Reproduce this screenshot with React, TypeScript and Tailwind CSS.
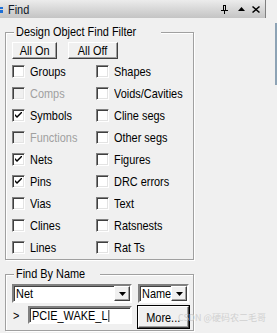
import React from "react";

const font = "font-['Liberation_Sans',Arial,sans-serif]";

// the dialog font is a tall, narrow bitmap face; squeeze Liberation Sans to its width
function T({ children, center }: { children: React.ReactNode; center?: boolean }) {
  return (
    <span className={`inline-block whitespace-nowrap scale-x-[0.84] ${center ? "origin-center" : "origin-left"}`}>
      {children}
    </span>
  );
}

function CheckBox({ checked, disabled }: { checked?: boolean; disabled?: boolean }) {
  return (
    <span
      className={`flex h-[13px] w-[13px] shrink-0 items-center justify-center border border-t-[#808080] border-l-[#808080] border-b-white border-r-white shadow-[inset_1px_1px_0_#404040,inset_-1px_-1px_0_#e3e3e3] ${
        disabled ? "bg-[#f0f0f0]" : "bg-white"
      }`}
    >
      {checked && (
        <svg width="7" height="7" viewBox="0 0 7 7">
          <path d="M0 2 L0 4 L2 6 L7 1 L7 -1 L2 4 Z" fill="#000" />
        </svg>
      )}
    </span>
  );
}

function Check({ label, checked, disabled }: { label: string; checked?: boolean; disabled?: boolean }) {
  return (
    <div className="flex h-[22px] items-center">
      <CheckBox checked={checked} disabled={disabled} />
      <span className={`ml-[5px] leading-[15px] ${disabled ? "text-[#a0a0a0]" : "text-black"}`}>
        <T>{label}</T>
      </span>
    </div>
  );
}

function Button({ label, className }: { label: string; className?: string }) {
  return (
    <div
      className={`flex items-center justify-center bg-[#f0f0f0] border border-t-white border-l-white border-b-[#404040] border-r-[#404040] shadow-[inset_-1px_-1px_0_#a0a0a0] leading-[15px] ${className ?? ""}`}
    >
      <T center>{label}</T>
    </div>
  );
}

function DropArrow() {
  return (
    <div className="flex h-full w-[16px] items-center justify-center bg-[#f0f0f0] border border-t-white border-l-white border-b-[#404040] border-r-[#404040] shadow-[inset_-1px_-1px_0_#a0a0a0]">
      <svg width="7" height="4" viewBox="0 0 7 4">
        <path d="M0 0 H7 L3.5 4 Z" fill="#000" />
      </svg>
    </div>
  );
}

function Combo({ value, className }: { value: string; className?: string }) {
  return (
    <div
      className={`flex items-stretch bg-white border-2 border-t-[#808080] border-l-[#808080] border-b-white border-r-white shadow-[inset_1px_1px_0_#404040] ${className ?? ""}`}
    >
      <span className="min-w-0 flex-1 self-center pl-[2px] leading-[15px]">
        <T>{value}</T>
      </span>
      <DropArrow />
    </div>
  );
}

function GroupBox({ title, className, children }: { title: string; className?: string; children: React.ReactNode }) {
  return (
    <div className={`relative border border-[#a0a0a0] shadow-[1px_1px_0_#fff,inset_1px_1px_0_#fff] ${className ?? ""}`}>
      <span className="absolute left-[8px] top-[-9px] bg-[#f0f0f0] px-[2px] leading-[15px]">
        <T>{title}</T>
      </span>
      {children}
    </div>
  );
}

export default function App() {
  return (
    <div className={`relative h-[333px] w-[277px] overflow-hidden bg-[#f0f0f0] text-[13px] text-black ${font}`}>
      <div className="flex h-[18px] w-[266px] items-center border-r border-[#808080] bg-gradient-to-b from-[#ececec] to-[#c4c4c4]">
        <div className="flex w-[8px] flex-col gap-[1px] pt-[1px]">
          <span className="h-[2px] w-[3px] bg-[#1e6fd6]" />
          <span className="h-[3px] w-[3px] bg-[#1e6fd6]" />
        </div>
        <span className="leading-[15px] text-[#101828]">
          <T>Find</T>
        </span>
        <div className="ml-auto flex items-center pr-[5px]">
          <svg width="7" height="9" viewBox="0 0 7 9">
            <path d="M2 0 H5 V5 H7 V6 H4 V9 H3 V6 H0 V5 H2 Z M3 1 V5 H4 V1 Z" fill="#000" fillRule="evenodd" />
          </svg>
          <svg className="ml-[10px]" width="7" height="4" viewBox="0 0 7 4">
            <path d="M0 4 H7 L3.5 0 Z" fill="#000" />
          </svg>
          <svg className="ml-[7px]" width="8" height="7" viewBox="0 0 8 7">
            <path d="M1 0 L4 2.5 L7 0 L8 1 L5 3.5 L8 6 L7 7 L4 4.5 L1 7 L0 6 L3 3.5 L0 1 Z" fill="#000" />
          </svg>
        </div>
      </div>

      <div className="pl-[5px] pt-[14px]">
        <GroupBox title="Design Object Find Filter" className="h-[228px] w-[189px]">
          <div className="pl-[6px] pt-[9px]">
            <div className="flex gap-[11px]">
              <Button label="All On" className="h-[17px] w-[45px]" />
              <Button label="All Off" className="h-[17px] w-[50px]" />
            </div>
            <div className="mt-[1px] grid grid-cols-[84px_1fr]">
              <Check label="Groups" />
              <Check label="Shapes" />
              <Check label="Comps" disabled />
              <Check label="Voids/Cavities" />
              <Check label="Symbols" checked />
              <Check label="Cline segs" />
              <Check label="Functions" disabled />
              <Check label="Other segs" />
              <Check label="Nets" checked />
              <Check label="Figures" />
              <Check label="Pins" checked />
              <Check label="DRC errors" />
              <Check label="Vias" />
              <Check label="Text" />
              <Check label="Clines" />
              <Check label="Ratsnests" />
              <Check label="Lines" />
              <Check label="Rat Ts" />
            </div>
          </div>
        </GroupBox>

        <GroupBox title="Find By Name" className="mt-[14px] h-[57px] w-[189px]">
          <div className="pl-[6px] pt-[9px]">
            <div className="flex gap-[6px]">
              <Combo value="Net" className="h-[19px] w-[120px]" />
              <Combo value="Name" className="h-[19px] w-[51px]" />
            </div>
            <div className="mt-[3px] flex items-start">
              <span className="w-[16px] pl-[1px] pt-[2px] leading-[15px]">
                <T>&gt;</T>
              </span>
              <div className="flex h-[18px] w-[104px] items-center bg-white border-2 border-t-[#808080] border-l-[#808080] border-b-white border-r-white shadow-[inset_1px_1px_0_#404040] pl-[2px] leading-[13px]">
                <T>
                  PCIE_WAKE_L<span className="ml-[1px] inline-block h-[12px] w-[1px] translate-y-[2px] bg-black" />
                </T>
              </div>
              <Button label="More..." className="ml-[6px] h-[22px] w-[51px] outline outline-1 outline-black" />
            </div>
          </div>
        </GroupBox>
      </div>

      <div className="absolute left-[275px] top-[23px] h-[62px] w-[2px] bg-[#8da3b5]" />
      <span className="absolute left-[178px] top-[312px] whitespace-nowrap text-[9px] leading-[12px] text-[#d0d0d0] font-['Noto_Sans_CJK_SC',sans-serif]">
        CSDN @硬码农二毛哥
      </span>
    </div>
  );
}
